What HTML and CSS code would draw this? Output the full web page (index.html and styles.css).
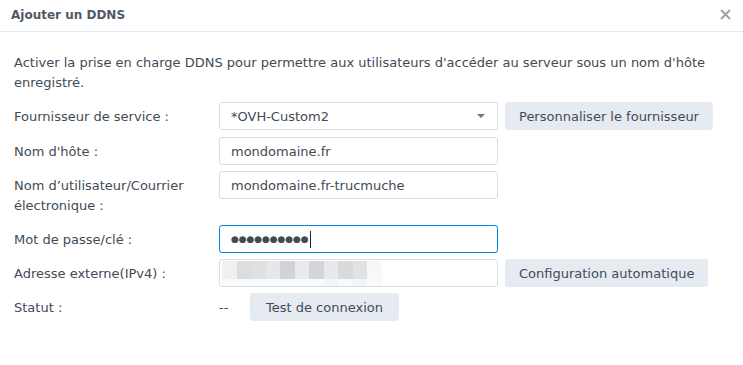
FILE: index.html
```html
<!DOCTYPE html>
<html lang="fr">

<head>
    <meta charset="UTF-8">
    <meta name="viewport" content="width=device-width, initial-scale=1.0">
    <title>Ajouter un DDNS</title>
    <link rel="stylesheet" href="styles.css">
</head>

<body>
    <div class="dialog">
        <div class="header">
            <span class="title">Ajouter un DDNS</span>
            <span class="close">
                <svg width="11" height="11" viewBox="0 0 11 11">
                    <path d="M1 1 L10 10 M10 1 L1 10" stroke="#9aa1a8" stroke-width="2" fill="none" />
                </svg>
            </span>
        </div>
        <div class="body">
            <p class="desc">Activer la prise en charge DDNS pour permettre aux utilisateurs d'accéder au serveur sous un nom d'hôte enregistré.</p>

            <div class="row first">
                <label>Fournisseur de service :</label>
                <div class="field select">
                    <span>*OVH-Custom2</span>
                    <span class="caret"></span>
                </div>
                <button class="btn">Personnaliser le fournisseur</button>
            </div>

            <div class="row">
                <label>Nom d'hôte :</label>
                <div class="field">mondomaine.fr</div>
            </div>

            <div class="row tall">
                <label>Nom d’utilisateur/Courrier électronique :</label>
                <div class="field">mondomaine.fr-trucmuche</div>
            </div>

            <div class="row">
                <label>Mot de passe/clé :</label>
                <div class="field focus"><span class="dots">●●●●●●●●●●</span><span class="cursor"></span></div>
            </div>

            <div class="row">
                <label>Adresse externe(IPv4) :</label>
                <div class="field masked">
                    <div class="blur">
                        <div class="cells top">
                            <i style="background:#f0f0f0"></i><i style="background:#dcdddf"></i><i style="background:#dfe0e1"></i><i style="background:#e6e7e8"></i><i style="background:#d1d3d6"></i><i style="background:#e9eaeb"></i><i style="background:#d3d5d8"></i><i style="background:#e8e9ea"></i><i style="background:#d9dadc"></i><i style="background:#e1e2e4"></i><i style="background:#f6f8fa"></i>
                        </div>
                        <div class="cells bottom">
                            <i style="background:#f8f9fa"></i><i style="background:#f9fafb"></i><i style="background:#f9fafb"></i><i style="background:#f9fafb"></i><i style="background:#f9fafb"></i><i style="background:#fafbfc"></i><i style="background:#f9fafb"></i><i style="background:#f3f4f6"></i><i style="background:#f8f9fa"></i><i style="background:#f3f4f6"></i><i style="background:#f9fafb"></i>
                        </div>
                    </div>
                </div>
                <button class="btn">Configuration automatique</button>
            </div>

            <div class="row">
                <label>Statut :</label>
                <span class="status">--</span>
                <button class="btn test">Test de connexion</button>
            </div>
        </div>
    </div>
</body>

</html>
```

FILE: styles.css
```css
* {
    margin: 0;
    padding: 0;
    box-sizing: border-box;
    font-family: 'DejaVu Sans', Verdana, sans-serif;
}

body {
    background-color: #fff;
    color: #414b55;
    font-size: 13px;
}

.dialog {
    width: 743px;
}

.header {
    height: 32px;
    border-bottom: 1px solid #e3e9f1;
    display: flex;
    align-items: center;
    justify-content: space-between;
    padding: 0 12px 2px 11px;
}

.title {
    font-weight: bold;
    font-size: 12px;
    color: #505a64;
}

.close {
    display: flex;
}

.body {
    padding: 21px 14px 0 14px;
}

.desc {
    line-height: 20px;
    margin-bottom: 9px;
}

.row {
    display: flex;
    align-items: center;
    min-height: 28px;
    margin-bottom: 6px;
}

.row.first {
    margin-bottom: 7px;
}

.row.tall {
    align-items: flex-start;
    margin-bottom: 9px;
}

.row label {
    width: 205px;
    line-height: 20px;
    padding-top: 1px;
}

.row.tall label {
    padding-top: 5px;
}

.field {
    width: 279px;
    height: 28px;
    border: 1px solid #d6dde5;
    border-radius: 3px;
    padding: 0 11px;
    display: flex;
    align-items: center;
}

.select {
    justify-content: space-between;
}

.caret {
    width: 0;
    height: 0;
    border-left: 4px solid transparent;
    border-right: 4px solid transparent;
    border-top: 4px solid #6e7780;
    margin-right: 1px;
}

.focus {
    border-color: #0086e5;
}

.dots {
    font-size: 9px;
    letter-spacing: -0.1px;
    color: #414b55;
}

.cursor {
    width: 1px;
    height: 17px;
    background: #222;
    margin-left: 1px;
}

.masked {
    padding: 0 0 0 2px;
    align-items: flex-start;
    overflow: hidden;
}

.blur {
    padding-top: 1px;
}

.cells {
    display: flex;
}

.cells i {
    display: block;
    width: 14.5px;
}

.cells.top i {
    height: 18px;
}

.cells.bottom i {
    height: 7px;
}

.btn {
    margin-left: 7px;
    height: 28px;
    padding: 0 14px;
    border: 0;
    border-radius: 3px;
    background-color: #e6ebf2;
    color: #414b55;
    font-size: 13px;
}

.status {
    width: 31px;
}

.status + .btn {
    margin-left: 0;
}

.btn.test {
    padding: 0 16px;
}
```
